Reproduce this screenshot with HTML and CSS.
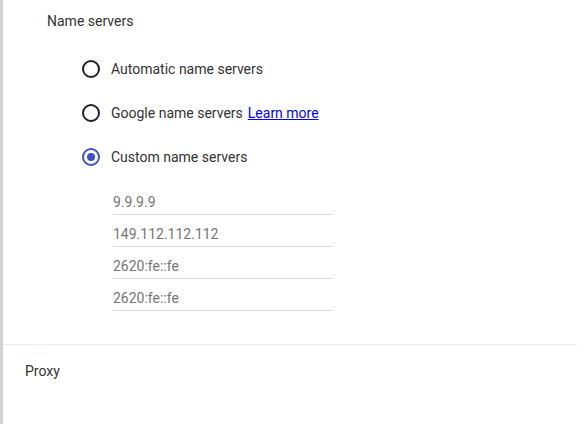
FILE: index.html
```html
<!DOCTYPE html>
<html>
<head>
<meta charset="utf-8">
<link rel="stylesheet" href="styles.css">
</head>
<body>
<div class="page">
  <section class="ns">
    <div class="heading">Name servers</div>
    <div class="radios">
      <label class="radio"><span class="dot"></span><span>Automatic name servers</span></label>
      <label class="radio"><span class="dot"></span><span>Google name servers</span><a class="link" href="#">Learn more</a></label>
      <label class="radio checked"><span class="dot"></span><span>Custom name servers</span></label>
    </div>
    <div class="fields">
      <div class="field">9.9.9.9</div>
      <div class="field">149.112.112.112</div>
      <div class="field">2620:fe::fe</div>
      <div class="field">2620:fe::fe</div>
    </div>
  </section>
  <section class="proxy">Proxy</section>
</div>
</body>
</html>
```

FILE: styles.css
```css
html, body {
  margin: 0;
  padding: 0;
  background: #fff;
}
body {
  font-family: Roboto, "Liberation Sans", sans-serif;
  font-size: 14px;
  color: #333;
}
.page {
  border-left: 3px solid #d2d2d2;
  height: 424px;
  box-sizing: border-box;
}
.ns {
  padding: 11px 0 33px 44px;
  border-bottom: 1px solid #ebebeb;
}
.heading {
  line-height: 20px;
}
.radios {
  margin-top: 16px;
  padding-left: 35px;
}
.radio {
  display: flex;
  align-items: center;
  height: 44px;
}
.dot {
  width: 18px;
  height: 18px;
  box-sizing: border-box;
  border: 2px solid #202124;
  border-radius: 50%;
  margin-right: 11px;
  display: flex;
  align-items: center;
  justify-content: center;
}
.checked .dot {
  border-color: #3f51c6;
}
.checked .dot::after {
  content: "";
  width: 8px;
  height: 8px;
  border-radius: 50%;
  background: #3f51c6;
}
.link {
  color: #0000ee;
  margin-left: 5px;
}
.fields {
  margin-top: 4px;
  padding-left: 66px;
}
.field {
  width: 220px;
  padding: 10px 0 3px;
  line-height: 18px;
  color: #757575;
  border-bottom: 1px solid #dcdcdc;
}
.proxy {
  padding: 16px 0 0 22px;
  line-height: 20px;
}
```
